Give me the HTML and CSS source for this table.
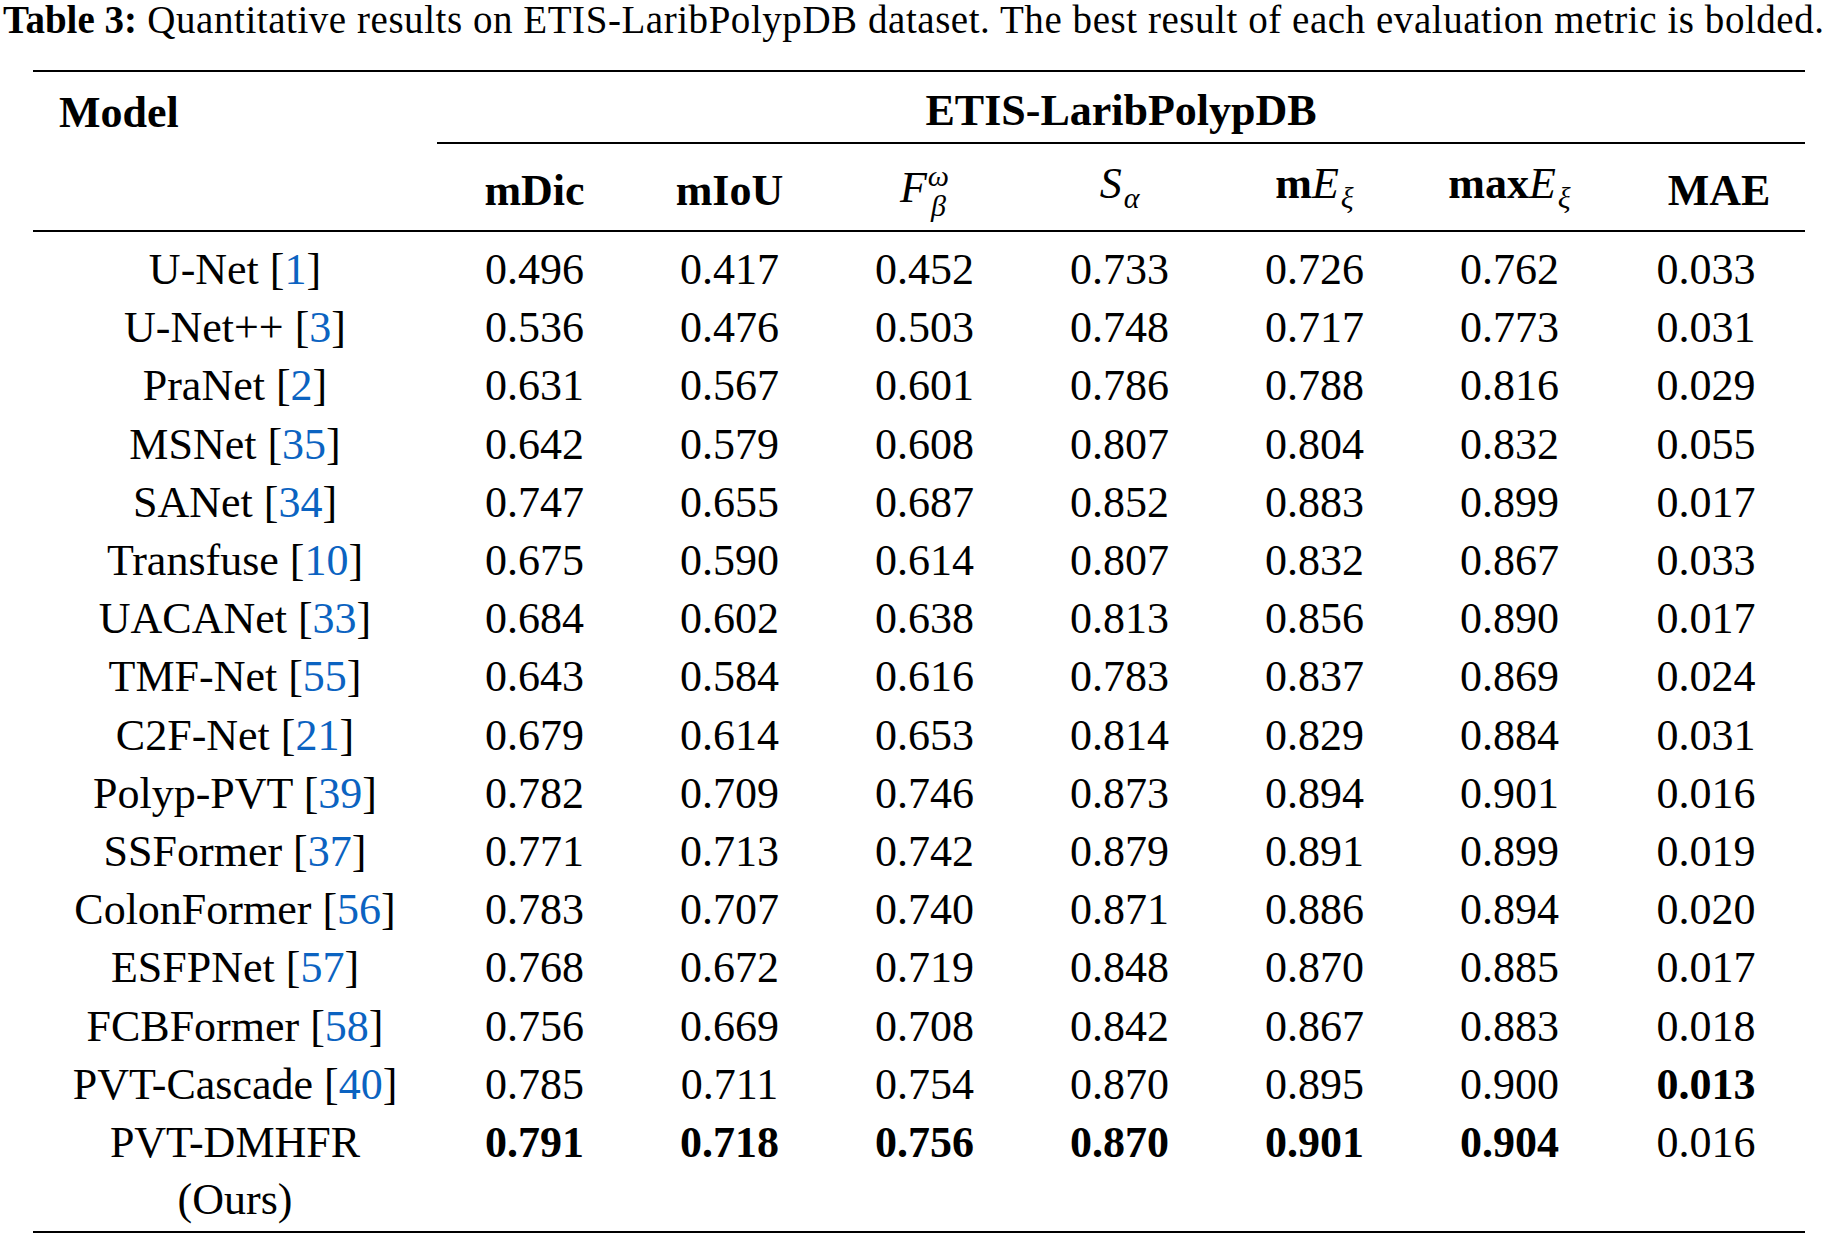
FILE: index.html
```html
<!DOCTYPE html>
<html>
<head>
<meta charset="utf-8">
<link rel="stylesheet" href="styles.css">
</head>
<body>
<div class="caption"><b>Table 3:</b> Quantitative results on ETIS-LaribPolypDB dataset. The best result of each evaluation metric is bolded.</div>
<table class="results">
  <colgroup>
    <col class="c-model">
    <col class="c-num"><col class="c-num"><col class="c-num"><col class="c-num"><col class="c-num"><col class="c-num">
    <col class="c-last">
  </colgroup>
  <thead>
    <tr class="h1">
      <th class="model-h" rowspan="2">Model</th>
      <th class="ds" colspan="7">ETIS-LaribPolypDB</th>
    </tr>
    <tr class="h2">
      <th>mDic</th>
      <th>mIoU</th>
      <th class="math"><span class="it">F</span><span class="supsub"><span class="sup">ω</span><span class="sub">β</span></span></th>
      <th class="math"><span class="it">S</span><span class="sub1">α</span></th>
      <th>m<span class="it n">E</span><span class="sub1">ξ</span></th>
      <th>max<span class="it n">E</span><span class="sub1">ξ</span></th>
      <th class="mae">MAE</th>
    </tr>
  </thead>
  <tbody>
    <tr class="first"><td class="m">U-Net [<span class="ref">1</span>]</td><td>0.496</td><td>0.417</td><td>0.452</td><td>0.733</td><td>0.726</td><td>0.762</td><td>0.033</td></tr>
    <tr><td class="m">U-Net++ [<span class="ref">3</span>]</td><td>0.536</td><td>0.476</td><td>0.503</td><td>0.748</td><td>0.717</td><td>0.773</td><td>0.031</td></tr>
    <tr><td class="m">PraNet [<span class="ref">2</span>]</td><td>0.631</td><td>0.567</td><td>0.601</td><td>0.786</td><td>0.788</td><td>0.816</td><td>0.029</td></tr>
    <tr><td class="m">MSNet [<span class="ref">35</span>]</td><td>0.642</td><td>0.579</td><td>0.608</td><td>0.807</td><td>0.804</td><td>0.832</td><td>0.055</td></tr>
    <tr><td class="m">SANet [<span class="ref">34</span>]</td><td>0.747</td><td>0.655</td><td>0.687</td><td>0.852</td><td>0.883</td><td>0.899</td><td>0.017</td></tr>
    <tr><td class="m">Transfuse [<span class="ref">10</span>]</td><td>0.675</td><td>0.590</td><td>0.614</td><td>0.807</td><td>0.832</td><td>0.867</td><td>0.033</td></tr>
    <tr><td class="m">UACANet [<span class="ref">33</span>]</td><td>0.684</td><td>0.602</td><td>0.638</td><td>0.813</td><td>0.856</td><td>0.890</td><td>0.017</td></tr>
    <tr><td class="m">TMF-Net [<span class="ref">55</span>]</td><td>0.643</td><td>0.584</td><td>0.616</td><td>0.783</td><td>0.837</td><td>0.869</td><td>0.024</td></tr>
    <tr><td class="m">C2F-Net [<span class="ref">21</span>]</td><td>0.679</td><td>0.614</td><td>0.653</td><td>0.814</td><td>0.829</td><td>0.884</td><td>0.031</td></tr>
    <tr><td class="m">Polyp-PVT [<span class="ref">39</span>]</td><td>0.782</td><td>0.709</td><td>0.746</td><td>0.873</td><td>0.894</td><td>0.901</td><td>0.016</td></tr>
    <tr><td class="m">SSFormer [<span class="ref">37</span>]</td><td>0.771</td><td>0.713</td><td>0.742</td><td>0.879</td><td>0.891</td><td>0.899</td><td>0.019</td></tr>
    <tr><td class="m">ColonFormer [<span class="ref">56</span>]</td><td>0.783</td><td>0.707</td><td>0.740</td><td>0.871</td><td>0.886</td><td>0.894</td><td>0.020</td></tr>
    <tr><td class="m">ESFPNet [<span class="ref">57</span>]</td><td>0.768</td><td>0.672</td><td>0.719</td><td>0.848</td><td>0.870</td><td>0.885</td><td>0.017</td></tr>
    <tr><td class="m">FCBFormer [<span class="ref">58</span>]</td><td>0.756</td><td>0.669</td><td>0.708</td><td>0.842</td><td>0.867</td><td>0.883</td><td>0.018</td></tr>
    <tr><td class="m">PVT-Cascade [<span class="ref">40</span>]</td><td>0.785</td><td>0.711</td><td>0.754</td><td>0.870</td><td>0.895</td><td>0.900</td><td class="b">0.013</td></tr>
    <tr class="last"><td class="m">PVT-DMHFR<br>(Ours)</td><td class="b">0.791</td><td class="b">0.718</td><td class="b">0.756</td><td class="b">0.870</td><td class="b">0.901</td><td class="b">0.904</td><td>0.016</td></tr>
  </tbody>
</table>
</body>
</html>
```

FILE: styles.css
```css
html, body {
  margin: 0;
  padding: 0;
  background: #ffffff;
}
body {
  font-family: "Liberation Serif", "Times New Roman", serif;
  color: #000;
  width: 1837px;
  height: 1237px;
  overflow: hidden;
}
.caption {
  font-size: 39px;
  letter-spacing: 0.55px;
  line-height: 40px;
  padding: 0 0 0 3px;
  white-space: nowrap;
  height: 40px;
}
.caption b {
  font-weight: bold;
  letter-spacing: 0;
}
.results {
  border-collapse: collapse;
  margin: 30px 0 0 33px;
  width: 1772px;
  table-layout: fixed;
  font-size: 44px;
}
.c-model { width: 404px; }
.c-num { width: 195px; }
.c-last { width: 198px; }

.results thead tr.h1 th {
  border-top: 2px solid #000;
}
.results th {
  font-weight: bold;
  padding: 0;
  text-align: center;
  line-height: 50px;
}
.h1 th {
  height: 62px;
  vertical-align: middle;
  padding-top: 8px;
}
.h1 .model-h {
  text-align: left;
  vertical-align: top;
  padding-left: 26px;
  padding-top: 16px;
  border-bottom: 2px solid #000;
}
.h1 .ds {
  border-bottom: 2px solid #000;
}
.h2 th {
  height: 79px;
  vertical-align: middle;
  border-bottom: 2px solid #000;
  padding-top: 7px;
}
.h2 .mae {
  padding-left: 26px;
}
.math {
  font-weight: normal;
}
.it {
  font-style: italic;
  font-weight: normal;
}
.sub1 {
  font-style: italic;
  font-weight: normal;
  font-size: 30px;
  vertical-align: -10px;
  margin-left: 2px;
}
.supsub {
  display: inline-flex;
  flex-direction: column;
  vertical-align: 16px;
  font-style: italic;
  font-weight: normal;
  font-size: 30px;
  line-height: 30px;
  margin-left: 1px;
}

.results td {
  text-align: center;
  padding: 0;
  line-height: 58.2px;
  vertical-align: top;
  white-space: nowrap;
}
.results tr.first td {
  padding-top: 9px;
}
.results tr.last td {
  border-bottom: 2px solid #000;
  padding-bottom: 2px;
}
.results td.m {
  line-height: 57.4px;
}
.results td.b {
  font-weight: bold;
}
.ref {
  color: #0b63c1;
}
```
